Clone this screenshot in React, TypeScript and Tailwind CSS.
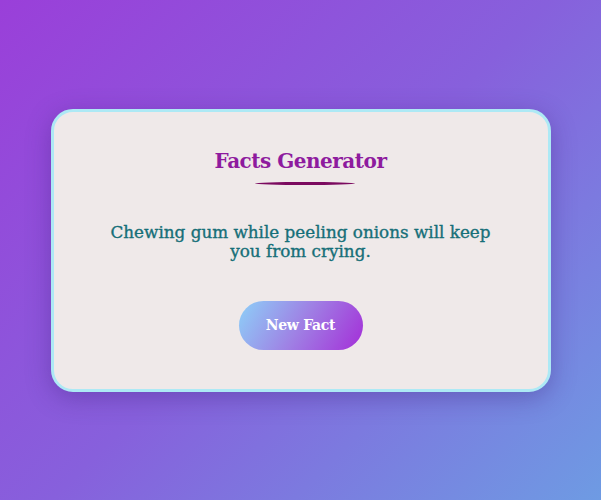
export default function App() {
  return (
    <div className="w-[601px] h-[500px] flex items-center justify-center bg-[linear-gradient(135deg,#9a3fd9_0%,#8760dc_50%,#6e9be3_100%)]">
      <div className="w-[500px] h-[283px] rounded-[22px] border-[3px] border-[#ade9f5] bg-[#efe9e9] shadow-[0_6px_24px_rgba(60,30,120,0.35)] flex flex-col items-center">
        <h1 className="mt-[34px] text-[20px] leading-[30px] font-bold text-[#8e1b9e] [font-family:'DejaVu_Serif',serif] tracking-[-0.5px]">Facts Generator</h1>
        <div className="mt-[6px] ml-[8px] w-[100px] h-[3px] rounded-[50%] bg-[#7b0a5f]"></div>
        <p className="mt-[38px] w-[400px] text-center text-[16.8px] leading-[19px] text-[#166f78] [font-family:'DejaVu_Serif',serif] [-webkit-text-stroke:0.35px_#166f78]">Chewing gum while peeling onions will keep you from crying.</p>
        <button className="mt-[40px] w-[124px] h-[49px] rounded-full bg-[linear-gradient(120deg,#8dd0f8_0%,#9f80e4_50%,#a42ed8_100%)] text-white font-bold text-[14px] tracking-[-0.3px] [font-family:'DejaVu_Serif',serif]">New Fact</button>
      </div>
    </div>
  );
}
